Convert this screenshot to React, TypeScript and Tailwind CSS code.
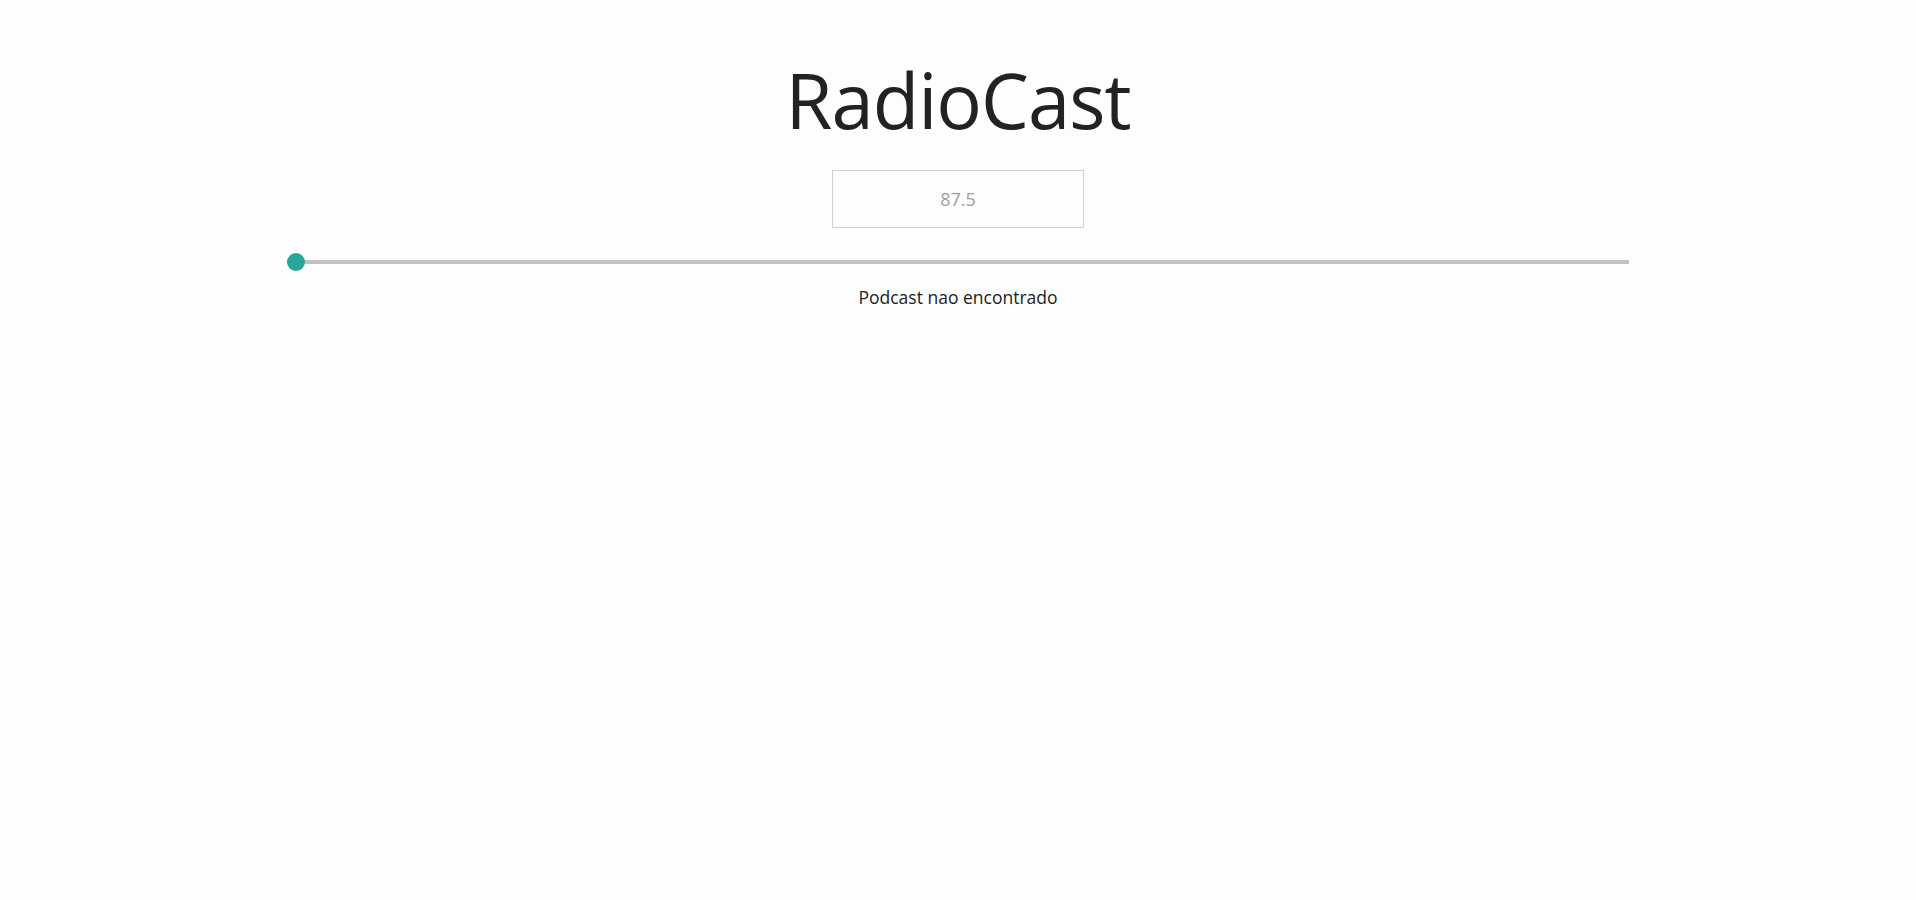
export default function App() {
  return (
    <div
      className="min-h-[900px] w-full bg-[#fdfdfd] flex flex-col items-center text-[#222]"
      style={{ fontFamily: '"Open Sans", "Noto Sans", sans-serif' }}
    >
      <h1 className="mt-[50px] text-[76px] leading-[100px] font-normal tracking-[-1px]">RadioCast</h1>
      <input
        type="text"
        placeholder="87.5"
        className="mt-[20px] w-[252px] h-[58px] border border-[#d0d0d0] bg-transparent text-center text-[18px] text-[#222] placeholder:text-[#9e9e9e] outline-none"
      />
      <div className="mt-[25px] w-[70%] h-[18px] flex items-center relative">
        <div className="w-full h-[4px] bg-[#c2c0c2]" />
        <div className="absolute left-0 top-0 w-[18px] h-[18px] rounded-full bg-[#26a69a]" />
      </div>
      <p className="mt-[14px] text-[17.5px] leading-[24px]">Podcast nao encontrado</p>
    </div>
  );
}
